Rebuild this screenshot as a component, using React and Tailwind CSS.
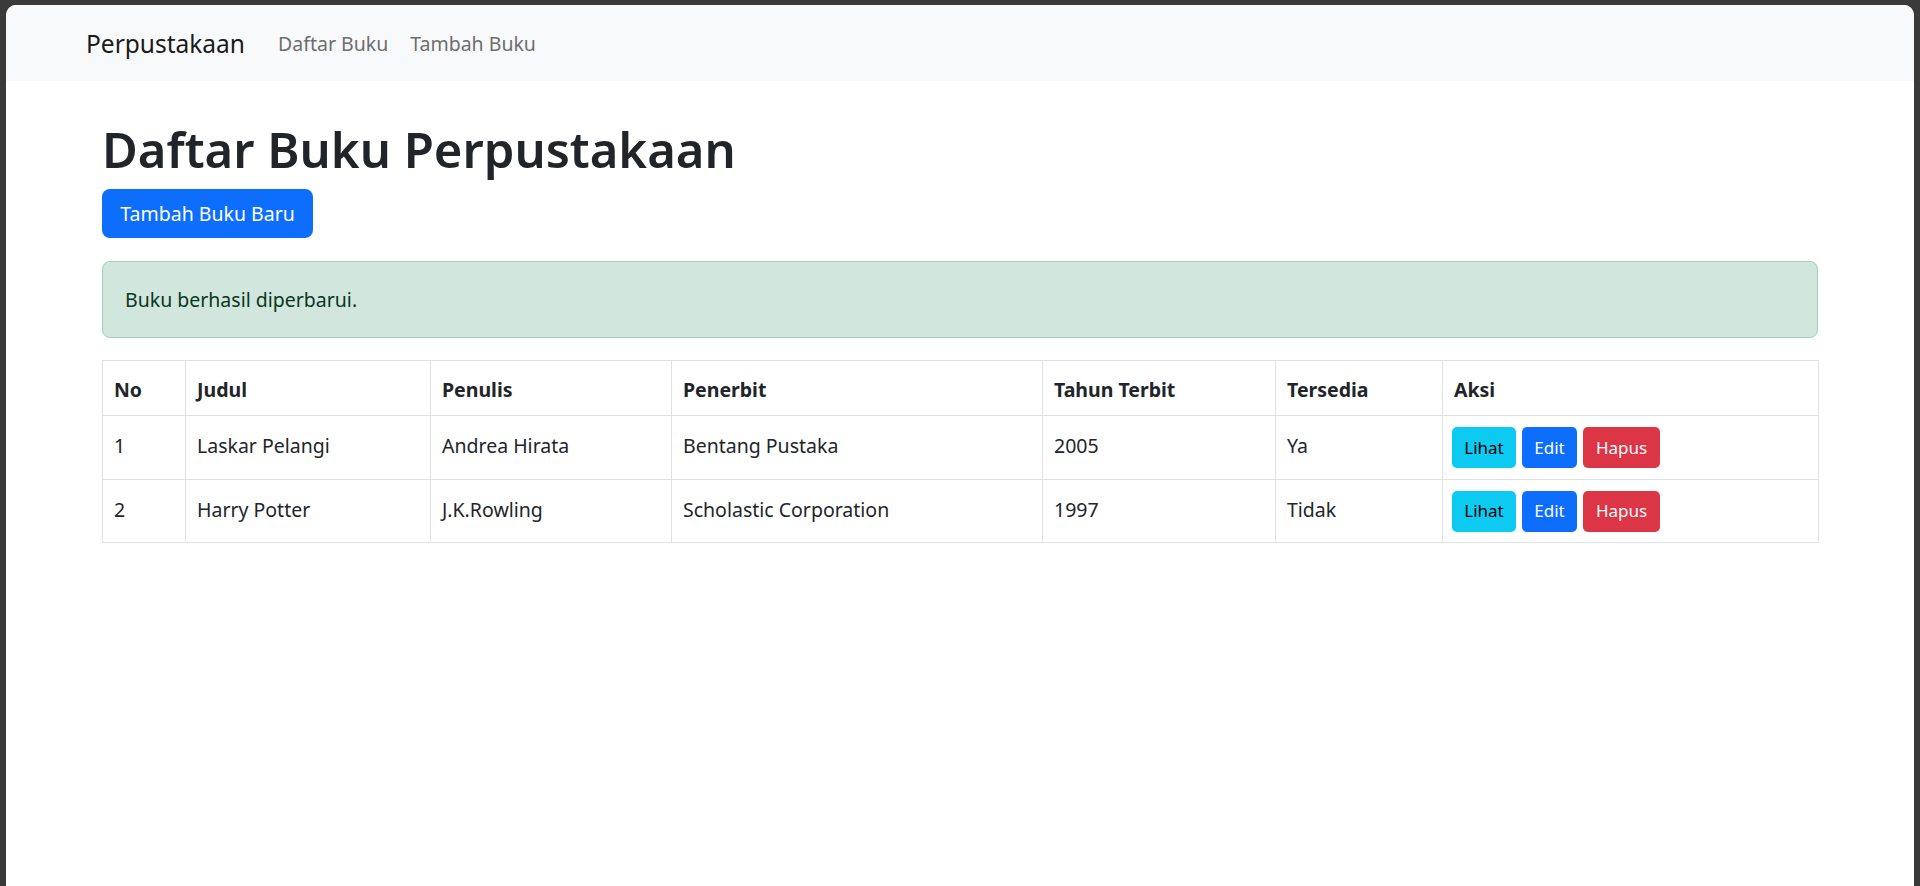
import React from "react";

const rows = [
  { no: 1, judul: "Laskar Pelangi", penulis: "Andrea Hirata", penerbit: "Bentang Pustaka", tahun: "2005", tersedia: "Ya" },
  { no: 2, judul: "Harry Potter", penulis: "J.K.Rowling", penerbit: "Scholastic Corporation", tahun: "1997", tersedia: "Tidak" },
];

export default function App() {
  return (
    <div
      className="min-h-screen bg-[#3a3a3a] pt-[5px] px-[6px]"
      style={{ fontFamily: '"Noto Sans", "Open Sans", sans-serif' }}
    >
      <div className="bg-white rounded-t-[10px] h-[881px] overflow-hidden">
        <nav className="h-[76px] bg-[#f8f9fa] flex items-center pl-[80px] pt-[2px]">
          <span className="text-[24.5px] text-[#1a1a1a] leading-[36px]">Perpustakaan</span>
          <span className="ml-[33px] text-[19.5px] text-[#6d6e6f] leading-[30px]">Daftar Buku</span>
          <span className="ml-[22px] text-[19.5px] text-[#6d6e6f] leading-[30px]">Tambah Buku</span>
        </nav>
        <main className="mx-auto w-[1716px] pt-[36px] text-[#212529]">
          <h1 className="text-[49px] font-semibold leading-[64px] h-[64px]">Daftar Buku Perpustakaan</h1>
          <button className="mt-[8px] w-[211px] h-[49px] rounded-[8px] bg-[#0d6efd] text-white text-[19.5px] flex items-center justify-center">
            Tambah Buku Baru
          </button>
          <div className="mt-[23px] h-[77px] rounded-[8px] border border-[#a3cfbb] bg-[#d1e7dd] text-[#0a3622] text-[19.5px] flex items-center px-[22px]">
            Buku berhasil diperbarui.
          </div>
          <table className="mt-[22px] w-full table-fixed border-collapse text-[19.5px]">
            <colgroup>
              <col className="w-[83px]" />
              <col className="w-[245px]" />
              <col className="w-[241px]" />
              <col className="w-[371px]" />
              <col className="w-[233px]" />
              <col className="w-[167px]" />
              <col className="w-[376px]" />
            </colgroup>
            <thead>
              <tr className="h-[55px]">
                {["No", "Judul", "Penulis", "Penerbit", "Tahun Terbit", "Tersedia", "Aksi"].map((h) => (
                  <th key={h} className="border border-[#dee2e6] px-[11px] pt-[3px] text-left font-bold align-middle">
                    {h}
                  </th>
                ))}
              </tr>
            </thead>
            <tbody>
              {rows.map((r, i) => (
                <tr key={r.no} className={i === 0 ? "h-[64px]" : "h-[63px]"}>
                  <td className="border border-[#dee2e6] px-[11px] pb-[3px] align-middle">{r.no}</td>
                  <td className="border border-[#dee2e6] px-[11px] pb-[3px] align-middle">{r.judul}</td>
                  <td className="border border-[#dee2e6] px-[11px] pb-[3px] align-middle">{r.penulis}</td>
                  <td className="border border-[#dee2e6] px-[11px] pb-[3px] align-middle">{r.penerbit}</td>
                  <td className="border border-[#dee2e6] px-[11px] pb-[3px] align-middle">{r.tahun}</td>
                  <td className="border border-[#dee2e6] px-[11px] pb-[3px] align-middle">{r.tersedia}</td>
                  <td className="border border-[#dee2e6] px-[9px] align-middle">
                    <div className="flex gap-[6px] text-[17px]">
                      <span className="w-[64px] h-[41px] rounded-[5px] bg-[#0dcaf0] text-black flex items-center justify-center">Lihat</span>
                      <span className="w-[55px] h-[41px] rounded-[5px] bg-[#0d6efd] text-white flex items-center justify-center">Edit</span>
                      <span className="w-[77px] h-[41px] rounded-[5px] bg-[#dc3545] text-white flex items-center justify-center">Hapus</span>
                    </div>
                  </td>
                </tr>
              ))}
            </tbody>
          </table>
        </main>
      </div>
    </div>
  );
}
